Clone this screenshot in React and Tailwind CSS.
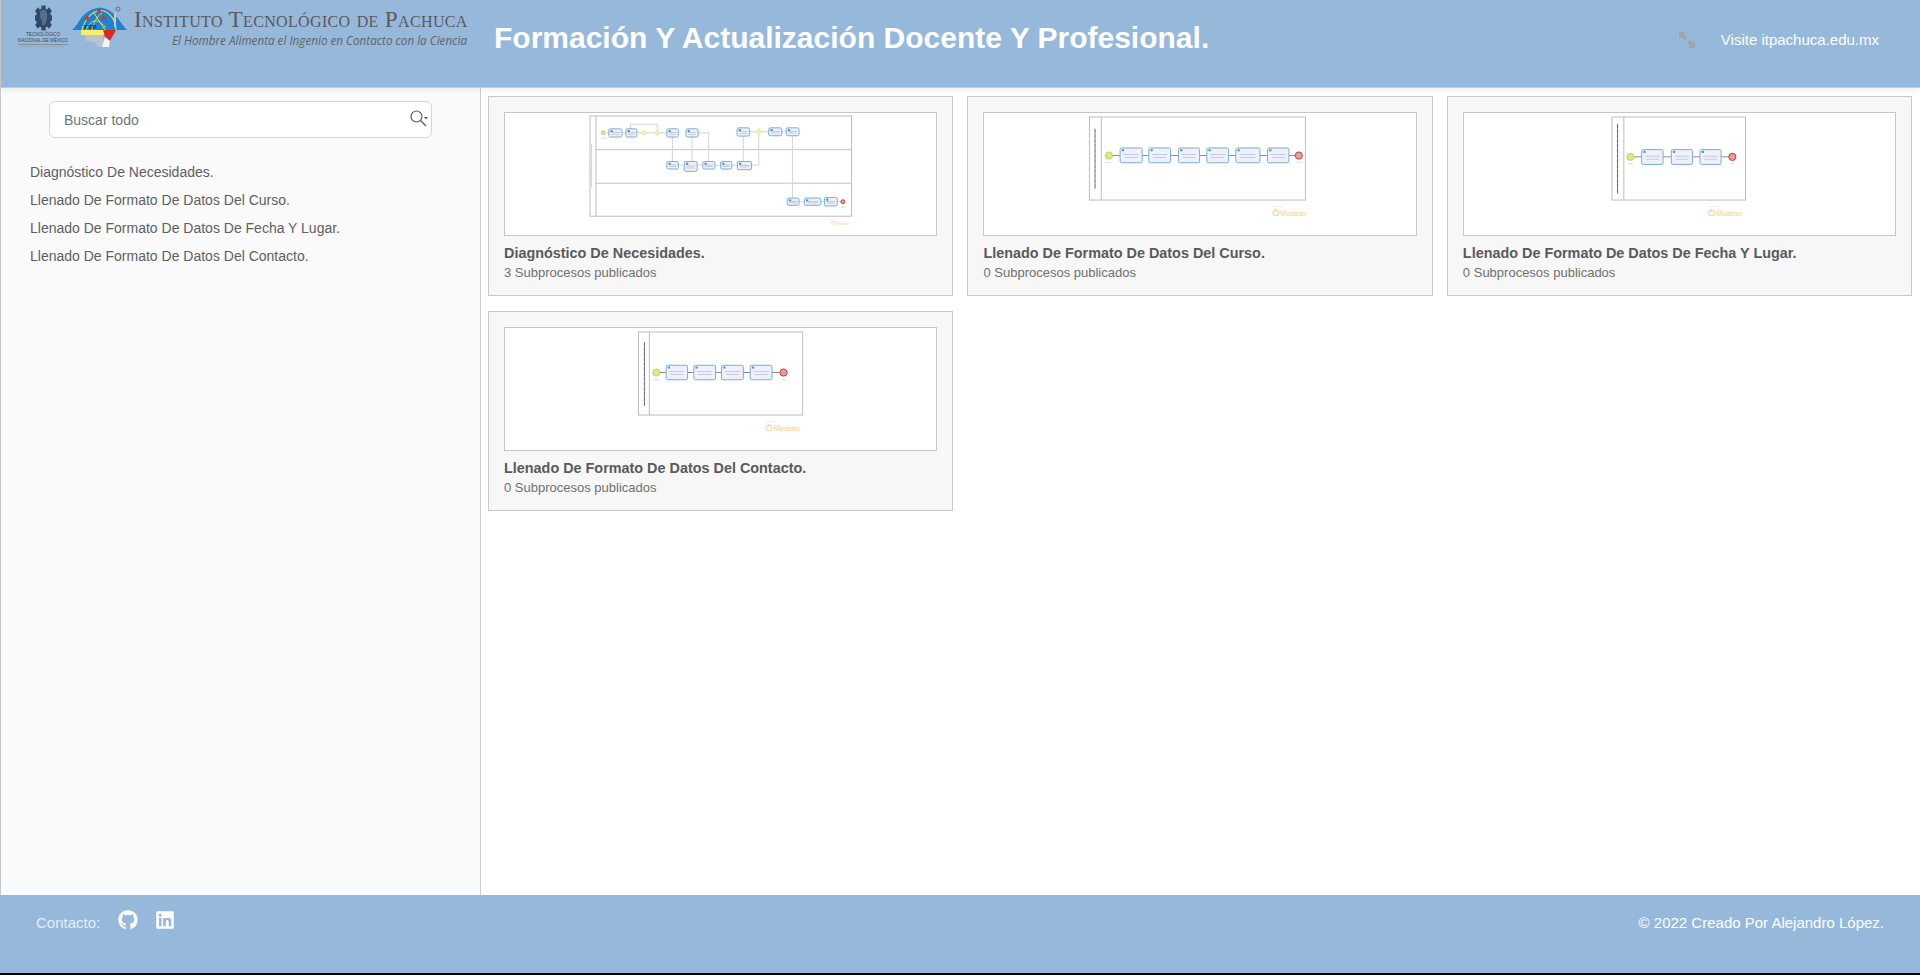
import { FaGithub, FaLinkedin } from "react-icons/fa";

const procesos = [
  { nombre: "Diagnóstico De Necesidades.", sub: 3 },
  { nombre: "Llenado De Formato De Datos Del Curso.", sub: 0 },
  { nombre: "Llenado De Formato De Datos De Fecha Y Lugar.", sub: 0 },
  { nombre: "Llenado De Formato De Datos Del Contacto.", sub: 0 },
];

// Coordenadas de los diagramas a escala 3x respecto a la miniatura (1298x370)
const diagramas = [
  {
    outer: [253, 9, 793, 304],
    lane: 271,
    separators: [111, 213],
    label: [258, 93, 133, "#d9c4dc"],
    start: [293, 60, 6],
    end: [1020, 269, 6],
    tasks: [
      [310, 48, 40, 25], [362, 48, 33, 25], [486, 48, 35, 25], [544, 48, 37, 25],
      [699, 45, 38, 25], [795, 45, 40, 24], [848, 45, 39, 24],
      [486, 147, 35, 23], [539, 147, 39, 30], [595, 147, 37, 23], [649, 147, 34, 23], [700, 147, 43, 25],
      [851, 258, 36, 22], [903, 258, 50, 22], [964, 256, 39, 26],
    ],
    gateways: [[416, 60], [457, 60], [765, 56]],
    lines: [
      "M299 60H310M350 60H362M395 60H410M422 60H451M463 60H486",
      "M376 48V34H457V54M503 73V147M562 73V147M521 158H539M578 158H595M581 60H613V147M632 158H649M683 158H700M718 147V70M743 158H765V62",
      "M737 57H759M771 57H795M835 57H848M867 69V258M887 269H903M953 269H964M1003 269H1014",
    ],
    mark: [985, 322, 0.55],
  },
  {
    outer: [315, 12, 655, 252],
    lane: 351,
    separators: [],
    label: [332, 48, 182, "#5a5a78"],
    start: [374, 129, 11],
    end: [950, 129, 11],
    tasks: [
      [408, 106, 67, 45], [495, 106, 66, 45], [585, 106, 64, 45],
      [671, 106, 66, 45], [759, 106, 73, 45], [855, 106, 65, 45],
    ],
    gateways: [],
    lines: ["M385 129H408M475 129H495M561 129H585M649 129H671M737 129H759M832 129H855M920 129H939"],
    mark: [870, 283, 1],
  },
  {
    outer: [444, 12, 405, 252],
    lane: 480,
    separators: [],
    label: [461, 33, 212, "#5a5a78"],
    start: [500, 133, 11],
    end: [809, 133, 11],
    tasks: [[534, 111, 65, 45], [624, 111, 64, 45], [711, 111, 64, 45]],
    gateways: [],
    lines: ["M511 133H534M599 133H624M688 133H711M775 133H798"],
    mark: [736, 283, 1],
  },
  {
    outer: [400, 12, 498, 252],
    lane: 433,
    separators: [],
    label: [418, 43, 193, "#5a5a78"],
    start: [454, 135, 11],
    end: [840, 135, 11],
    tasks: [[484, 113, 65, 44], [568, 113, 66, 44], [652, 113, 66, 44], [739, 113, 66, 44]],
    gateways: [],
    lines: ["M465 135H484M549 135H568M634 135H652M718 135H739M805 135H829"],
    mark: [786, 283, 1],
  },
];

function Diagrama({ d }) {
  const [ox, oy, ow, oh] = d.outer;
  const [lx, ly, lh, lc] = d.label;
  return (
    <svg viewBox="0 0 1298 370" className="block w-full h-full">
      <rect x={ox} y={oy} width={ow} height={oh} fill="#fff" stroke="#bdbdbd" strokeWidth="3" />
      <line x1={d.lane} y1={oy} x2={d.lane} y2={oy + oh} stroke="#bdbdbd" strokeWidth="3" />
      {d.separators.map((y) => (
        <line key={y} x1={d.lane} y1={y} x2={ox + ow} y2={y} stroke="#c4c4c4" strokeWidth="3" />
      ))}
      <line x1={lx} y1={ly} x2={lx} y2={ly + lh} stroke={lc} strokeWidth="3" strokeDasharray="14 1" />
      {d.lines.map((l, i) => (
        <path key={i} d={l} fill="none" stroke={d.gateways.length ? "#d4d4d4" : "#8a8a8a"} strokeWidth="3" />
      ))}
      {d.tasks.map(([x, y, w, h], i) => (
        <g key={i}>
          <rect x={x} y={y} width={w} height={h} rx="5" fill="#eef0fb" stroke="#78aed0" strokeWidth="3" />
          <rect x={x + 5} y={y + 4} width="7" height="6" fill="#4f93b8" />
          <rect x={x + w * 0.15} y={y + h * 0.42} width={w * 0.7} height="2" fill="#b4b4c6" />
          <rect x={x + w * 0.2} y={y + h * 0.62} width={w * 0.6} height="2" fill="#b4b4c6" />
        </g>
      ))}
      {d.gateways.map(([x, y], i) => (
        <polygon key={i} points={`${x},${y - 8} ${x + 8},${y} ${x},${y + 8} ${x - 8},${y}`} fill="#f4f4a8" stroke="#d8d88a" strokeWidth="2" />
      ))}
      <circle cx={d.start[0]} cy={d.start[1]} r={d.start[2]} fill="#d3f07a" stroke="#a9c45a" strokeWidth="2" />
      <circle cx={d.end[0]} cy={d.end[1]} r={d.end[2]} fill="#ee9a9a" stroke="#b5404a" strokeWidth="3" />
      <rect x={d.start[0] - 8} y={d.start[1] + d.start[2] + 9} width="16" height="3" fill="#d8d8d8" />
      <rect x={d.end[0] - 6} y={d.end[1] + d.end[2] + 9} width="12" height="3" fill="#d8d8d8" />
      <g transform={`translate(${d.mark[0]} ${d.mark[1]}) scale(${d.mark[2]})`} opacity="0.6">
        <rect x="0" y="0" width="30" height="2" fill="#d8d8d8" />
        <circle cx="10" cy="20" r="9" fill="none" stroke="#f6a94f" strokeWidth="3" />
        <line x1="10" y1="9" x2="10" y2="17" stroke="#f6a94f" strokeWidth="3" />
        <text x="24" y="30" fontSize="22" fill="#f6a94f" fontFamily="Liberation Sans, sans-serif">Modeler</text>
        <rect x="25" y="11" width="18" height="4" fill="#fbd9b0" />
      </g>
    </svg>
  );
}

function LogoTecNM() {
  const teeth = [0, 45, 90, 135];
  return (
    <div className="flex flex-col items-center w-[52px]">
      <svg viewBox="0 0 20 24" preserveAspectRatio="none" className="w-[17px] h-[26px]">
        {teeth.map((t) => (
          <rect key={t} x="7.5" y="0.5" width="5" height="23" fill="#2f4a68" transform={`rotate(${t} 10 12)`} />
        ))}
        <circle cx="10" cy="12" r="9" fill="#2f4a68" />
        <path d="M6 6c3-3 7-2 8 1 1 3 0 8-2 11l-4 1c1-3 0-6-2-7z" fill="#566f8c" />
      </svg>
      <span className="mt-[1px] text-[4.6px] leading-[6px] text-[#3e4a5a] font-['Liberation_Sans',sans-serif]">TECNOLÓGICO</span>
      <span className="text-[4.6px] leading-[6px] text-[#3e4a5a] whitespace-nowrap font-['Liberation_Sans',sans-serif]">NACIONAL DE MÉXICO</span>
      <span className="w-[50px] h-[1px] bg-[#7e8fa2]"></span>
      <span className="mt-[1px] w-[42px] h-[1px] bg-[#9aa8b8]"></span>
    </div>
  );
}

function LogoITP() {
  return (
    <svg viewBox="0 0 56 42" className="w-[56px] h-[42px]">
      <path d="M0 25C7 20 9 6 25 3 41 1 47 17 55 25Z" fill="#1c83d0" />
      <path d="M10 25C14 10 24 4 32 6 42 10 44 20 44 25" fill="none" stroke="#f1dc3a" strokeWidth="1.2" />
      <path d="M14 25C18 16 25 11 34 23M22 8 33 25M30 8C24 12 22 18 20 25" fill="none" stroke="#f1dc3a" strokeWidth="1" />
      <circle cx="15" cy="13" r="2" fill="#e0302c" />
      <circle cx="27" cy="6" r="2" fill="#e0302c" />
      <circle cx="32" cy="13" r="2" fill="#e0302c" />
      <rect x="9" y="25" width="24" height="5" fill="#f7ee6a" />
      <path d="M13 30H30L34 42H27L22 37 14 36Z" fill="#b9c4cc" />
      <path d="M31 25H44L38 36 33 32Z" fill="#d82a20" />
      <path d="M33 32 38 36 37 42 30 42Z" fill="#f2f2f2" />
      <rect x="42" y="8" width="2" height="14" fill="#c9c9c9" />
      <circle cx="46" cy="4" r="2" fill="none" stroke="#555" strokeWidth="0.7" />
      <text x="11" y="24" fontSize="7" fontWeight="700" fill="#1b2f6e" fontFamily="Liberation Serif, serif">TTP</text>
    </svg>
  );
}

export default function App() {
  return (
    <div className="h-[975px] flex flex-col overflow-hidden bg-white font-['Liberation_Sans',Arial,sans-serif]">
      <header className="relative z-10 h-[88px] shrink-0 flex items-start bg-[#96b8db] border-l border-[#c8c8c8] border-b border-b-[#b9cde2] shadow-[0_2px_6px_rgba(0,0,0,0.07)]">
        <div className="w-[479px] shrink-0 flex items-start pt-[5px] pl-[16px]">
          <LogoTecNM />
          <div className="ml-[3px]"><LogoITP /></div>
          <div className="ml-[6px] pt-[3px] w-[333px] text-right">
            <div className="text-[#5b595c] text-[23.2px] tracking-[0.35px] leading-[22px] whitespace-nowrap font-['Liberation_Serif',serif] [font-variant:small-caps]">
              Instituto Tecnológico de Pachuca
            </div>
            <div className="mt-[3px] text-[#5f6468] text-[11.7px] leading-[15px] italic whitespace-nowrap font-['Open_Sans',sans-serif]">
              El Hombre Alimenta el Ingenio en Contacto con la Ciencia
            </div>
          </div>
        </div>
        <h1 className="ml-[14px] mt-[20px] text-white font-bold text-[30px] leading-[36px] whitespace-nowrap">
          Formación Y Actualización Docente Y Profesional.
        </h1>
        <div className="ml-auto mt-[30px] flex items-center pr-[41px]">
          <svg viewBox="0 0 16 16" className="w-[16px] h-[16px] text-[#a3a3a3]" fill="currentColor">
            <path d="M0 0h6.5L4.6 1.9 8 5.3 5.3 8 1.9 4.6 0 6.5zM16 16H9.5l1.9-1.9L8 10.7 10.7 8l3.4 3.4L16 9.5z" />
          </svg>
          <a className="ml-[26px] text-white text-[15px] leading-[20px] whitespace-nowrap">Visite itpachuca.edu.mx</a>
        </div>
      </header>

      <div className="flex-1 flex min-h-0">
        <aside className="w-[481px] shrink-0 bg-[#fafafa] border-l border-[#c8c8c8] border-r border-r-[#cfcfcf] pt-[13px]">
          <div className="relative ml-[48px] w-[383px] h-[37px]">
            <input
              placeholder="Buscar todo"
              readOnly
              className="w-full h-full rounded-[6px] bg-white border border-[#d6d6d6] pl-[14px] pr-[30px] text-[14px] text-[#6c757d] placeholder:text-[#6c757d] outline-none"
            />
            <svg viewBox="0 0 20 20" className="absolute right-[3px] top-[8px] w-[20px] h-[20px]" fill="none" stroke="#5a5a5a" strokeWidth="1.2">
              <circle cx="7.5" cy="7.5" r="5.5" />
              <path d="M11.5 11.5 17 17" />
              <path d="M15 8h4l-2 2.5z" fill="#5a5a5a" stroke="none" />
            </svg>
          </div>
          <ul className="mt-[20px] ml-[29px]">
            {procesos.map((p) => (
              <li key={p.nombre} className="h-[28px] leading-[28px] text-[14px] text-[#606060] whitespace-nowrap">
                {p.nombre}
              </li>
            ))}
          </ul>
        </aside>

        <main className="flex-1 bg-white pt-[8px] pl-[7px] pr-[8px]">
          <div className="grid grid-cols-3 gap-x-[14.3px] gap-y-[15px]">
            {procesos.map((p, i) => (
              <div key={p.nombre} className="h-[200px] bg-[#f7f7f7] border border-[#c9c9c9] pt-[15px] px-[15px]">
                <div className="h-[124px] bg-white border border-[#c6c6c6]">
                  <Diagrama d={diagramas[i]} />
                </div>
                <h3 className="mt-[8px] text-[14.4px] leading-[18px] font-bold text-[#5a5a5a] whitespace-nowrap">{p.nombre}</h3>
                <p className="mt-[2px] text-[13px] leading-[18px] text-[#707070] whitespace-nowrap">{p.sub} Subprocesos publicados</p>
              </div>
            ))}
          </div>
        </main>
      </div>

      <footer className="h-[80px] shrink-0 flex items-start bg-[#96b8db] border-b-2 border-black pl-[36px] pr-[36px]">
        <span className="mt-[18px] text-[#e6eef6] text-[15px] leading-[20px]">Contacto:</span>
        <FaGithub className="ml-[18px] mt-[15px] text-white w-[20px] h-[20px]" />
        <FaLinkedin className="ml-[17px] mt-[15px] text-white w-[20px] h-[20px]" />
        <span className="ml-auto mt-[18px] text-white text-[15px] leading-[20px]">© 2022 Creado Por Alejandro López.</span>
      </footer>
    </div>
  );
}
